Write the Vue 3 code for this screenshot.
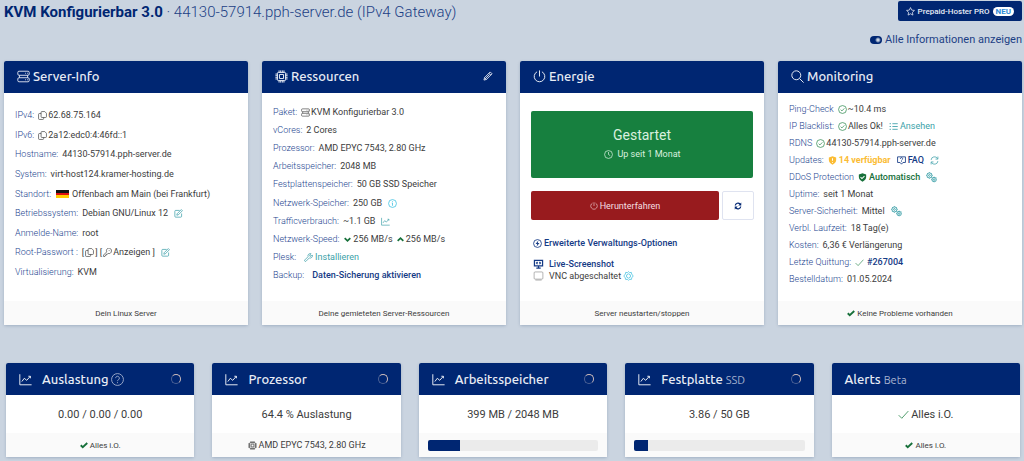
<script setup>
import { h } from 'vue'

const stroke = (d, w = 1.1) => ({ d, w })
const fill = (d) => ({ d, fill: true })

const icons = {
  server: [stroke('M2.5 1.5h11a1.5 1.5 0 0 1 1.5 1.5v2a1.5 1.5 0 0 1-1.5 1.5h-11A1.5 1.5 0 0 1 1 5V3a1.5 1.5 0 0 1 1.5-1.5zM2.5 9.5h11A1.5 1.5 0 0 1 15 11v2a1.5 1.5 0 0 1-1.5 1.5h-11A1.5 1.5 0 0 1 1 13v-2a1.5 1.5 0 0 1 1.5-1.5zM3 6.5v3M13 6.5v3M10 4h1M12.300 4h1M10 12h1M12.300 12h1')],
  chip: [stroke('M4 3h8a1 1 0 0 1 1 1v8a1 1 0 0 1-1 1H4a1 1 0 0 1-1-1V4a1 1 0 0 1 1-1zM5.500 5.500h5v5h-5zM5 .5V3M7 .5V3M9 .5V3M11 .5V3M5 13v2.500M7 13v2.500M9 13v2.500M11 13v2.500M.5 5H3M.5 7H3M.5 9H3M.5 11H3M13 5h2.500M13 7h2.500M13 9h2.500M13 11h2.500', 1.2)],
  pencil: [stroke('M11.500 1.500l3 3-9 9L1.500 14.500l1-4zM9.500 3.500l3 3M4.500 11.500l6-6M2.500 10.500l3 3', 1.4)],
  power: [stroke('M5 2.200a6.500 6.500 0 1 0 6 0M8 .5v7.500', 1.2)],
  search: [stroke('M12 6.500a5.500 5.500 0 1 1-11 0a5.500 5.500 0 0 1 11 0zM10.500 10.500l5 5', 1.2)],
  star: [stroke('M8 1l2.100 4.500 4.900.6-3.600 3.400.9 4.900L8 12l-4.300 2.400.9-4.900L1 6.100l4.900-.6z', 1.4)],
  copy: [stroke('M7 1h5l3 3v6a1.500 1.500 0 0 1-1.500 1.500H7A1.500 1.500 0 0 1 5.500 10V2.500A1.500 1.500 0 0 1 7 1zM5.500 4.500h-3A1.500 1.500 0 0 0 1 6v7.500A1.500 1.500 0 0 0 2.500 15h6a1.500 1.500 0 0 0 1.500-1.500v-2', 1.2)],
  edit: [stroke('M10 2.500H3A1.500 1.500 0 0 0 1.500 4v9A1.500 1.500 0 0 0 3 14.500h9a1.500 1.500 0 0 0 1.500-1.500V8M13 1l2 2-7.500 7.500-2.500.5.500-2.500z', 1.3)],
  key: [stroke('M15 5.500a4.500 4.500 0 0 1-6 4.200L7.500 11H6v1.500H4.500V14L3.500 15H1v-2.500l5.600-5.600A4.500 4.500 0 1 1 15 5.500zM10.500 4l1.500 1.500', 1.2)],
  wrench: [stroke('M12.500 1.300a4 4 0 0 0-5.200 5.200L1.500 12.300a1.500 1.500 0 0 0 2.200 2.200l5.800-5.800a4 4 0 0 0 5.200-5.200L12.500 5.700l-2-.2-.2-2z', 1.3)],
  info: [stroke('M15 8A7 7 0 1 1 1 8a7 7 0 0 1 14 0zM8 7v5M8 4v1.300M6.700 7H8', 1.4)],
  chart: [stroke('M1 1.500v13h14.500M3.500 10.500l3-4 3 2.500 4.500-5M11.500 4H14v2.500', 1.2)],
  down: [stroke('M3 5.500l5 5 5-5', 3)],
  up: [stroke('M3 10.500l5-5 5 5', 3)],
  clock: [stroke('M15 8A7 7 0 1 1 1 8a7 7 0 0 1 14 0zM8 3.500V8l3 2', 1.3)],
  sync: [stroke('M2.500 7A5.500 5.500 0 0 1 12 4M13.500 9A5.500 5.500 0 0 1 4 12', 2.4), fill('M14.500 1v6h-6zM1.500 15V9h6z')],
  refresh: [stroke('M2 7a6 6 0 0 1 11.500-2M14 9a6 6 0 0 1-11.500 2M14 1v4.500H9.800M2 15v-4.500h4.200', 1.3)],
  bolt: [stroke('M15 8A7 7 0 1 1 1 8a7 7 0 0 1 14 0z', 1.5), fill('M9.500 2.800L4.500 8.800h3l-1 4.500 5-6.200h-3z')],
  screen: [stroke('M1.500 2h13v9h-13zM4.500 14.500h7M8 11v3M6.500 4.800L5 6.500l1.500 1.700M9.500 4.800L11 6.500 9.500 8.200', 2)],
  monitor: [stroke('M2.500 1.500h11A1.500 1.500 0 0 1 15 3v8.500a1.500 1.500 0 0 1-1.500 1.500h-11A1.500 1.500 0 0 1 1 11.500V3a1.500 1.500 0 0 1 1.500-1.500zM3 14.500h10', 1)],
  hexgear: [stroke('M8 1l1.800 1.700 2.700-.5.600 2.700L15.500 8l-2.200 2.800-.8 2.800-2.700-.4L8 15l-1.800-1.800-2.700.4-.8-2.800L.5 8l2.400-3.100.6-2.700 2.700.5zM8 4.500l3 1.700v3.500l-3 1.800-3-1.800V6.200z', 1.2)],
  okcircle: [stroke('M15 8A7 7 0 1 1 1 8a7 7 0 0 1 14 0zM4.700 8.300l2.300 2.200 4.300-4.500', 1.3)],
  list: [stroke('M6 3h9.500M6 8h9.500M6 13h9.500M1 3h2.500M1 8h2.500M1 13h2.500', 1.5)],
  shieldwarn: [fill('M8 .5l6.500 2.300v4.500c0 4-2.800 6.700-6.500 8.200C4.300 14 1.500 11.300 1.500 7.300V2.800z'), { d: 'M8 4v4.500M8 10.500v1.500', w: 1.8, light: true }],
  shieldok: [fill('M8 .5l6.500 2.300v4.500c0 4-2.800 6.700-6.500 8.200C4.300 14 1.500 11.300 1.500 7.300V2.800z'), { d: 'M4.500 7.500L7 10l4.500-4.500', w: 1.8, light: true }],
  faq: [stroke('M1 1.500h14v10h-4.500L8 14.500l-2.500-3H1zM6 5a2 2 0 1 1 2.800 1.700Q8 7 8 8M8 9.200v1.200', 1.5)],
  gears: [stroke('M8.700 5a3.700 3.700 0 1 1-7.400 0 3.700 3.700 0 0 1 7.400 0zM6.300 5a1.300 1.300 0 1 1-2.600 0 1.300 1.300 0 0 1 2.600 0zM15 11a3.200 3.200 0 1 1-6.400 0 3.200 3.200 0 0 1 6.400 0zM13 11a1.200 1.200 0 1 1-2.400 0 1.200 1.200 0 0 1 2.400 0z', 1.3), { d: 'M5 .3v9.400M.3 5h9.400M1.700 1.700l6.600 6.600M8.300 1.700L1.700 8.300M11.800 6.800v8.400M7.600 11H16M9 8l5.800 6M14.800 8L9 14', w: 1, dash: true }],
  check: [stroke('M1 9l4.500 4.500L15 3', 1.2)],
  tick: [stroke('M1.500 8.500l4 4L14.500 4', 3.6)],
  question: [stroke('M15.300 8A7.300 7.300 0 1 1 .7 8a7.300 7.300 0 0 1 14.600 0zM5.700 6.300a2.300 2.300 0 1 1 3.500 2Q8 8.900 8 10M8 11.300v1.200', 1.1)],
}

const Icon = ({ name }) =>
  h('svg', { viewBox: '0 0 16 16', class: 'icon', 'aria-hidden': 'true' },
    icons[name].map((p) => h('path', {
      d: p.d,
      fill: p.fill ? 'currentColor' : 'none',
      stroke: p.fill ? 'none' : p.light ? '#fff' : 'currentColor',
      'stroke-width': p.w,
      'stroke-dasharray': p.dash ? '1.200 7' : undefined,
    })))
Icon.props = ['name']

const metrics = [
  { title: 'Auslastung', help: true, spin: true, value: '0.00 / 0.00 / 0.00', foot: 'Alles i.O.', footIcon: 'tick' },
  { title: 'Prozessor', spin: true, value: '64.4 % Auslastung', foot: 'AMD EPYC 7543, 2.80 GHz', footIcon: 'chip', large: true },
  { title: 'Arbeitsspeicher', spin: true, value: '399 MB / 2048 MB', bar: 19 },
  { title: 'Festplatte', sub: 'SSD', spin: true, value: '3.86 / 50 GB', bar: 8 },
  { title: 'Alerts', sub: 'Beta', value: 'Alles i.O.', valueIcon: 'check', foot: 'Alles i.O.', footIcon: 'tick' },
]
</script>

<template>
  <div class="page">
    <header class="top">
      <h1><b>KVM Konfigurierbar 3.0</b> · 44130-57914.pph-server.de (IPv4 Gateway)</h1>
      <div class="actions">
        <button class="pro" type="button"><Icon name="star" /> Prepaid-Hoster PRO <span class="new">NEU</span></button>
        <label class="toggle"><input type="checkbox" checked />Alle Informationen anzeigen</label>
      </div>
    </header>

    <main>
      <div class="cards">
        <section class="card">
          <h2><Icon name="server" />Server-Info</h2>
          <ul class="body info">
            <li><span class="k">IPv4:</span><Icon name="copy" />62.68.75.164</li>
            <li><span class="k">IPv6:</span><Icon name="copy" />2a12:edc0:4:46fd::1</li>
            <li><span class="k">Hostname:</span>44130-57914.pph-server.de</li>
            <li><span class="k">System:</span>virt-host124.kramer-hosting.de</li>
            <li><span class="k">Standort:</span><span class="flag"></span>Offenbach am Main (bei Frankfurt)</li>
            <li><span class="k">Betriebssystem:</span>Debian GNU/Linux 12<a href="#" class="teal after" aria-label="Betriebssystem ändern"><Icon name="edit" /></a></li>
            <li><span class="k">Anmelde-Name:</span>root</li>
            <li><span class="k">Root-Passwort :</span>[<Icon name="copy" />] [<Icon name="key" />Anzeigen ]<a href="#" class="teal after" aria-label="Passwort ändern"><Icon name="edit" /></a></li>
            <li><span class="k">Virtualisierung:</span>KVM</li>
          </ul>
          <footer>Dein Linux Server</footer>
        </section>

        <section class="card">
          <h2><Icon name="chip" />Ressourcen<a href="#" class="modify" aria-label="Ressourcen bearbeiten"><Icon name="pencil" /></a></h2>
          <ul class="body resources">
            <li><span class="k">Paket:</span><Icon name="server" />KVM Konfigurierbar 3.0</li>
            <li><span class="k">vCores:</span>2 Cores</li>
            <li><span class="k">Prozessor:</span>AMD EPYC 7543, 2.80 GHz</li>
            <li><span class="k">Arbeitsspeicher:</span>2048 MB</li>
            <li><span class="k">Festplattenspeicher:</span>50 GB SSD Speicher</li>
            <li><span class="k">Netzwerk-Speicher:</span>250 GB<span class="cyan after"><Icon name="info" /></span></li>
            <li><span class="k">Trafficverbrauch:</span>~1.1 GB<a href="#" class="teal after" aria-label="Traffic-Verlauf"><Icon name="chart" /></a></li>
            <li><span class="k">Netzwerk-Speed:</span><span class="green"><Icon name="down" /></span>256 MB/s <span class="green"><Icon name="up" /></span>256 MB/s</li>
            <li><span class="k wide">Plesk:</span><a href="#" class="teal"><Icon name="wrench" />Installieren</a></li>
            <li><span class="k wide">Backup:</span><a href="#" class="strong">Daten-Sicherung aktivieren</a></li>
          </ul>
          <footer>Deine gemieteten Server-Ressourcen</footer>
        </section>

        <section class="card">
          <h2><Icon name="power" />Energie</h2>
          <div class="body energy">
            <div class="state">
              <strong>Gestartet</strong>
              <span><Icon name="clock" />Up seit 1 Monat</span>
            </div>
            <div class="buttons">
              <button class="stop" type="button"><Icon name="power" />Herunterfahren</button>
              <button class="restart" type="button" aria-label="Neu starten"><Icon name="sync" /></button>
            </div>
            <a href="#" class="strong option"><Icon name="bolt" />Erweiterte Verwaltungs-Optionen</a>
            <a href="#" class="strong screen"><Icon name="screen" />Live-Screenshot</a>
            <div class="screen vnc"><Icon name="monitor" />VNC abgeschaltet<a href="#" class="cyan" aria-label="VNC einstellen"><Icon name="hexgear" /></a></div>
          </div>
          <footer>Server neustarten/stoppen</footer>
        </section>

        <section class="card">
          <h2><Icon name="search" />Monitoring</h2>
          <ul class="body monitoring">
            <li><span class="k">Ping-Check</span><span class="ok"><Icon name="okcircle" /></span>~10.4 ms</li>
            <li><span class="k">IP Blacklist:</span><span class="ok"><Icon name="okcircle" /></span>Alles Ok!<a href="#" class="teal after"><Icon name="list" />Ansehen</a></li>
            <li><span class="k">RDNS</span><span class="ok"><Icon name="okcircle" /></span>44130-57914.pph-server.de</li>
            <li><span class="k">Updates:</span><b class="warn"><Icon name="shieldwarn" />14 verfügbar</b><a href="#" class="strong after"><Icon name="faq" />FAQ</a><a href="#" class="teal after" aria-label="Aktualisieren"><Icon name="refresh" /></a></li>
            <li><span class="k">DDoS Protection</span><span class="green auto"><Icon name="shieldok" />Automatisch</span><a href="#" class="teal after gears" aria-label="DDoS-Schutz einstellen"><Icon name="gears" /></a></li>
            <li><span class="k">Uptime:</span>seit 1 Monat</li>
            <li><span class="k">Server-Sicherheit:</span>Mittel<a href="#" class="teal after gears" aria-label="Sicherheit einstellen"><Icon name="gears" /></a></li>
            <li><span class="k">Verbl. Laufzeit:</span>18 Tag(e)</li>
            <li><span class="k">Kosten:</span>6,36 € Verlängerung</li>
            <li><span class="k">Letzte Quittung:</span><span class="ok"><Icon name="check" /></span><a href="#" class="strong receipt">#267004</a></li>
            <li><span class="k">Bestelldatum:</span>01.05.2024</li>
          </ul>
          <footer><span class="green"><Icon name="tick" /></span>Keine Probleme vorhanden</footer>
        </section>
      </div>

      <div class="metrics">
        <section v-for="m in metrics" :key="m.title" class="card">
          <h2 :class="{ graph: m.spin }">
            <Icon v-if="m.spin" name="chart" />
            <span>{{ m.title }} <small v-if="m.sub">{{ m.sub }}</small></span>
            <span v-if="m.help" class="help"><Icon name="question" /></span>
            <span v-if="m.spin" class="spinner"></span>
          </h2>
          <div class="value"><span v-if="m.valueIcon" class="ok"><Icon :name="m.valueIcon" /></span>{{ m.value }}</div>
          <footer :class="{ large: m.large }">
            <div v-if="m.bar" class="track"><div class="fill" :style="{ width: m.bar + '%' }"></div></div>
            <template v-else><span :class="{ green: m.footIcon === 'tick' }"><Icon :name="m.footIcon" /></span>{{ m.foot }}</template>
          </footer>
        </section>
      </div>
    </main>
  </div>
</template>

<style>
body { background: #cad4e0; }
</style>

<style scoped>
.page {
  padding: 1px 2px 4px 4px;
  font: 9px/17px Roboto, sans-serif;
  color: #3c3c3c;
}
a { color: inherit; text-decoration: none; }
button { font-family: inherit; cursor: pointer; }
.icon { flex: none; width: 9px; height: 9px; display: block; }
.top { display: flex; justify-content: space-between; height: 60px; }
h1 { margin: 0; font-size: 15px; line-height: 22px; font-weight: 300; color: #1c3f85; }
h1 b { font-weight: 700; color: #002672; }
.actions { display: flex; flex-direction: column; align-items: flex-end; gap: 10px; }
.pro {
  display: flex; align-items: center; gap: 3px; height: 20px; padding: 0 8px;
  border: 0; border-radius: 2px; background: #002672; color: #e6ebf5; font-size: 8px; font-weight: 500;
}
.new { padding: 0 3px; border-radius: 5px; background: #fff; color: #2e8bd8; font-weight: 700; line-height: 9px; }
.toggle { display: flex; align-items: center; gap: 3px; font-size: 11px; color: #1c3f85; }
.toggle input {
  appearance: none; width: 12px; height: 8px; margin: 0; border-radius: 4px;
  background: radial-gradient(circle at 8px 4px, #cad4e0 1px, #002672 3px);
}
.cards { display: grid; grid-template-columns: repeat(4, 1fr); gap: 14px; }
.card {
  display: flex; flex-direction: column; background: #fff; border-radius: 2px;
  box-shadow: 0 1px 3px rgba(40, 70, 110, .25);
}
.card h2 {
  display: flex; align-items: center; gap: 3px; height: 32px; box-sizing: border-box; margin: 0; padding: 0 13px 2px;
  background: #002672; color: #e8ecf5; border-radius: 2px 2px 0 0;
  font: 500 13px/30px Ubuntu, "Noto Sans", sans-serif;
}
h2 .icon { width: 13px; height: 13px; }
.modify { margin-left: auto; }
.modify .icon { width: 10px; height: 10px; }
.body { flex: 1; margin: 0; list-style: none; display: flex; flex-direction: column; justify-content: space-between; }
.info { padding: 14px 11px 20px; }
.resources { padding: 11px 11px 17px; }
.monitoring { padding: 8px 11px 13px; }
li { display: flex; align-items: center; gap: 1px; white-space: pre; }
.k { color: #24468f; font-weight: 300; margin-right: 3px; }
.k.wide { margin-right: 7px; }
.flag {
  width: 13px; height: 8px; margin: 0 2px 0 1px;
  background: linear-gradient(#111 33%, #dd1010 33% 66%, #fc0 66%);
}
li a, .warn, .auto { display: flex; align-items: center; gap: 2px; }
.after { margin-left: 5px; }
.teal { color: #3b9fa8; }
.cyan { color: #3fc0e0; }
.green { color: #17703a; }
.ok { color: #2f8a50; }
.warn { color: #fbbc34; font-weight: 700; }
.auto { font-weight: 500; }
.gears .icon { width: 11px; height: 11px; }
.strong { color: #143a85; font-weight: 500; }
.receipt { margin-left: 2px; }
footer {
  display: flex; align-items: center; justify-content: center; gap: 2px; height: 24px;
  background: #fafafa; font-size: 8px;
}
footer.large { font-size: 9px; }
footer .icon { width: 8px; height: 8px; }
.large .icon { width: 9px; height: 9px; }
.energy { padding: 18px 11px 12px; justify-content: flex-start; }
.state {
  display: flex; flex-direction: column; align-items: center; padding: 14px 0 15px;
  border-radius: 2px; background: #17803f; color: #d9f0df;
}
.state strong { font-size: 14px; line-height: 20px; font-weight: 400; }
.state span { display: flex; align-items: center; gap: 5px; line-height: 18px; }
.buttons { display: flex; gap: 3px; margin: 13px -1px 15px 0; }
.buttons button { display: flex; align-items: center; justify-content: center; gap: 2px; height: 29px; border-radius: 2px; font-size: 9px; }
.stop { flex: 1; border: 0; background: #981b1e; color: #f5dfe0; }
.stop .icon { width: 8px; height: 8px; }
.restart { width: 32px; border: 1px solid #dfe3f0; background: #fff; color: #002672; }
.restart .icon { width: 8px; height: 8px; }
.option, .screen { display: flex; align-items: center; gap: 2px; padding-left: 2px; }
.screen { gap: 5px; line-height: 12px; margin-top: 6px; }
.screen .icon { width: 11px; height: 10px; }
.vnc { margin-top: 0; }
.vnc > .icon { color: #888; }
.vnc a { margin-left: -3px; }
.metrics { display: grid; grid-template-columns: repeat(5, 1fr); gap: 18px; padding: 0 2px; margin-top: 38px; }
.metrics h2 { padding-bottom: 0; line-height: 32px; }
.metrics small { font-size: 11px; font-weight: 400; color: #a5b2cf; }
.graph > .icon { margin-right: 7px; }
.help { color: #a5b2cf; }
.spinner { width: 8px; height: 8px; margin-left: auto; border: 1px solid #4c6295; border-top-color: #cbb; border-right-color: #cbb; border-radius: 50%; }
.value { display: flex; align-items: center; justify-content: center; gap: 2px; height: 38px; font-size: 11px; }
.value .icon { width: 11px; height: 11px; }
.metrics footer { padding: 0 9px; }
.track { flex: 1; height: 11px; border-radius: 2px; background: #ebebeb; overflow: hidden; }
.fill { height: 100%; background: #002672; }
</style>
